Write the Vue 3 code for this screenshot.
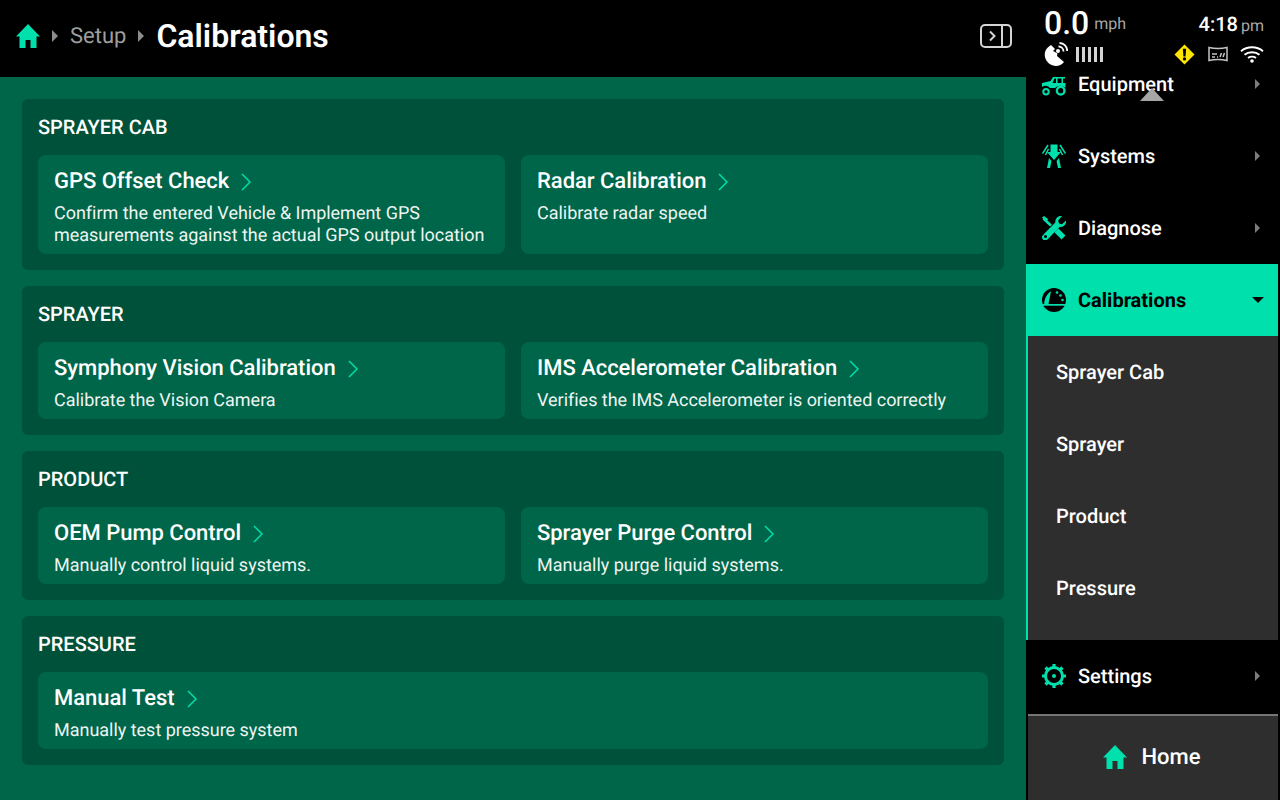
<template>
  <div class="screen">
    <div class="left">
      <header class="topbar">
        <svg class="home-ico" viewBox="0 0 24 24"><path d="M12 0 0 12.500h3.500V24h6v-8h5v8h6V12.500H24z" /></svg>
        <span class="crumb-arrow"></span>
        <span class="crumb">Setup</span>
        <span class="crumb-arrow"></span>
        <h1 class="page-title">Calibrations</h1>
        <svg class="panel-ico" viewBox="0 0 32 24" fill="none" stroke="#d4d4d4" stroke-width="2">
          <rect x="1" y="1" width="30" height="22" rx="4" />
          <path d="M22 1v22" />
          <path d="M10 7.500 14.500 12 10 16.500" />
        </svg>
      </header>
      <main class="content">
        <section v-for="group in groups" :key="group.title" class="group">
          <h2 class="group-title">{{ group.title }}</h2>
          <div class="cards">
            <a v-for="card in group.cards" :key="card.name" class="card" :class="{ wide: card.wide }">
              <div class="card-name">
                {{ card.name }}
                <svg class="chev" viewBox="0 0 10 18" fill="none" stroke="#00e0ac" stroke-width="1.500"><path d="M1 1l8 8-8 8" /></svg>
              </div>
              <p v-for="line in card.lines" :key="line" class="card-desc">{{ line }}</p>
            </a>
          </div>
        </section>
      </main>
    </div>

    <aside class="side">
      <div class="status">
        <div class="status-row">
          <div class="speed"><b>0.0</b><span>mph</span></div>
          <div class="clock"><b>4:18</b><span>pm</span></div>
        </div>
        <div class="status-row icons">
          <div class="gps">
            <svg class="dish" viewBox="0 0 24 24">
              <path fill="#fff" d="M7 3C2 6 0 10 1 15c1 5 6 9 11 9 3 0 6-1.500 8-4l-7-6 .5-2.500L11 10 9 9l2-2z" />
              <circle cx="14" cy="9" r="2" fill="#fff" />
              <path fill="none" stroke="#fff" stroke-width="1.800" d="M14.500 4.500c2.800 0 5 2.200 5 5M15.500 1c4.500 0 7.700 3.500 7.700 8" />
            </svg>
            <div class="bars"><i v-for="n in 5" :key="n"></i></div>
          </div>
          <div class="status-ico">
            <svg class="warn" viewBox="0 0 22 22">
              <path fill="#ffe600" d="M11 .5 21.500 11 11 21.500.5 11z" />
              <path fill="#000" d="M9.300 5h3.400l-.6 8H9.900z" />
              <circle cx="11" cy="15.700" r="1.700" fill="#000" />
            </svg>
            <svg class="shield" viewBox="0 0 20 16" fill="none" stroke="#c4c4c4">
              <path stroke-width="1.500" d="M1 1.500c6 1.200 12 1.200 18 0v13c-6-1.200-12-1.200-18 0z" />
              <path stroke-width="1.500" d="M4 8h5M4 11h3M9 11h1M12 11l1.500-4M15 11l1.500-4" />
            </svg>
            <svg class="wifi" viewBox="0 0 24 18" fill="none" stroke="#fff" stroke-width="1.900">
              <path d="M1 6.200c6.200-5.300 15.800-5.300 22 0M4.500 9.800c4-3.400 11-3.400 15 0M8 13c2.200-1.700 5.800-1.700 8 0" />
              <circle cx="12" cy="16" r="1.800" fill="#fff" stroke="none" />
            </svg>
          </div>
        </div>
      </div>
      <span class="scroll-up"></span>

      <nav class="nav">
        <a class="nav-row">
          <svg class="nav-ico" viewBox="0 0 24 24" fill="#00e0ac">
            <path fill-rule="evenodd" d="M0 11l8.500-2L11 5h12v1.500h-2V11h2.500v4.500h-.5a7 7 0 0 0-10 .5h-5a5.500 5.500 0 0 0-8-1zM12.500 6.500 10.500 11h3.500V6.500zM15.500 6.500V11h4V6.500z" />
            <circle cx="4" cy="19.700" r="2.700" fill="none" stroke="#00e0ac" stroke-width="2" />
            <circle cx="18.700" cy="18.700" r="3.800" fill="none" stroke="#00e0ac" stroke-width="2.400" />
          </svg>
          <span>Equipment</span><i class="arrow"></i>
        </a>
        <a class="nav-row">
          <svg class="nav-ico" viewBox="0 0 24 24" fill="#00e0ac">
            <path d="M8.500 .5h7V8h3.500l-7 8-7-8h3.500z" />
            <path d="M7 14l2.500 3L8 24H5zM17 14l-2.500 3L16 24h3z" />
            <path fill="none" stroke="#00e0ac" stroke-width="1.500" d="M6 1 .5 9.500M6.500 5 3.500 11M18 1l5.500 8.500M17.500 5l3 6" />
          </svg>
          <span>Systems</span><i class="arrow"></i>
        </a>
        <a class="nav-row">
          <svg class="nav-ico" viewBox="0 0 24 24" fill="none">
            <path stroke="#00e0ac" stroke-width="2.600" d="M1.500 2.500 12 12.500" />
            <path fill="#00e0ac" d="M0 1.500 2 0l4 3-1.500 3z" />
            <path stroke="#00e0ac" stroke-width="5.500" d="M13 13l8.500 8.500" />
            <path stroke="#000" stroke-width="7" d="M3 21 14.500 9" />
            <path fill="#00e0ac" d="M24 4.500l-4 3.700-3-.8-.8-3L20 0c-3.500-.7-7 2-6.700 6.500L1.500 18.500c-2 2-1.800 3.700-.5 5s3.200 1.300 5-.5L17.500 11c4 .5 7.200-3 6.500-6.500zM3.500 22a1.500 1.500 0 1 1 0-3 1.500 1.500 0 0 1 0 3z" />
          </svg>
          <span>Diagnose</span><i class="arrow"></i>
        </a>
        <a class="nav-row active">
          <svg class="nav-ico" viewBox="0 0 24 24">
            <circle cx="12" cy="12" r="12" fill="#000" />
            <rect x="0" y="16" width="24" height="1.700" fill="#00e0ac" />
            <path fill="#00e0ac" d="M2.200 16C2.200 10.500 5 6 9 3.300L6.500 16z" />
            <circle cx="15" cy="4.500" r="1.300" fill="#00e0ac" />
            <circle cx="18.500" cy="7.500" r="1.300" fill="#00e0ac" />
            <circle cx="20.500" cy="12" r="1.300" fill="#00e0ac" />
          </svg>
          <span>Calibrations</span><i class="arrow-down"></i>
        </a>
        <div class="sub">
          <a v-for="item in subItems" :key="item" class="sub-row">{{ item }}</a>
        </div>
        <a class="nav-row">
          <svg class="nav-ico" viewBox="0 0 24 24" fill="none" stroke="#00e0ac">
            <circle cx="12" cy="12" r="8.500" stroke-width="3" />
            <circle cx="12" cy="12" r="2" fill="#00e0ac" stroke="none" />
            <path stroke-width="3.200" d="M12 0v3.500M12 20.500V24M0 12h3.500M20.500 12H24M3.500 3.500 6 6M18 18l2.500 2.500M20.500 3.500 18 6M6 18l-2.500 2.500" />
          </svg>
          <span>Settings</span><i class="arrow"></i>
        </a>
      </nav>

      <a class="home-btn">
        <svg class="home-ico" viewBox="0 0 24 24"><path d="M12 0 0 12.500h3.500V24h6v-8h5v8h6V12.500H24z" /></svg>
        <span>Home</span>
      </a>
    </aside>
  </div>
</template>

<script setup>
const groups = [
  {
    title: 'SPRAYER CAB',
    cards: [
      {
        name: 'GPS Offset Check',
        lines: ['Confirm the entered Vehicle & Implement GPS', 'measurements against the actual GPS output location']
      },
      { name: 'Radar Calibration', lines: ['Calibrate radar speed'] }
    ]
  },
  {
    title: 'SPRAYER',
    cards: [
      { name: 'Symphony Vision Calibration', lines: ['Calibrate the Vision Camera'] },
      { name: 'IMS Accelerometer Calibration', lines: ['Verifies the IMS Accelerometer is oriented correctly'] }
    ]
  },
  {
    title: 'PRODUCT',
    cards: [
      { name: 'OEM Pump Control', lines: ['Manually control liquid systems.'] },
      { name: 'Sprayer Purge Control', lines: ['Manually purge liquid systems.'] }
    ]
  },
  {
    title: 'PRESSURE',
    cards: [{ name: 'Manual Test', lines: ['Manually test pressure system'], wide: true }]
  }
]

const subItems = ['Sprayer Cab', 'Sprayer', 'Product', 'Pressure']
</script>

<style>
html,
body {
  margin: 0;
  background: #000;
}
</style>

<style scoped>
.screen {
  display: flex;
  width: 1280px;
  height: 800px;
  overflow: hidden;
  background: #000;
  color: #fff;
  font-family: Roboto, 'Liberation Sans', sans-serif;
  text-rendering: geometricPrecision;
}

.left {
  display: flex;
  flex-direction: column;
  width: 1026px;
}

.topbar {
  display: flex;
  align-items: center;
  flex: none;
  height: 77px;
  padding: 0 14px 5px 16px;
  box-sizing: border-box;
  background: #000;
}

.home-ico {
  width: 24px;
  height: 24px;
  fill: #00e0ac;
}

.crumb-arrow {
  width: 0;
  height: 0;
  margin: 0 12px;
  border-left: 6px solid #8c8c8c;
  border-top: 6px solid transparent;
  border-bottom: 6px solid transparent;
}

.crumb {
  font-size: 22px;
  color: #9e9e9e;
}

.page-title {
  margin: 0;
  font-size: 32px;
  font-weight: 600;
}

.panel-ico {
  width: 32px;
  height: 24px;
  margin-left: auto;
}

.content {
  flex: 1;
  display: flex;
  flex-direction: column;
  gap: 16px;
  padding: 22px 22px 0;
  background: #00664a;
}

.group {
  padding: 16px;
  border-radius: 6px;
  background: #00513a;
}

.group-title {
  margin: 0 0 16px;
  font-size: 20px;
  font-weight: 500;
  line-height: 24px;
}

.cards {
  display: grid;
  grid-template-columns: 1fr 1fr;
  gap: 16px;
}

.card {
  padding: 8px 16px 7px;
  border-radius: 8px;
  background: #00664a;
}

.card.wide {
  grid-column: 1 / -1;
}

.card-name {
  display: flex;
  align-items: center;
  margin-bottom: 4px;
  padding-top: 2px;
  font-size: 22px;
  font-weight: 500;
  line-height: 34px;
  letter-spacing: -0.03px;
}

.chev {
  width: 10px;
  height: 18px;
  margin-left: 12px;
}

.card-desc {
  margin: 0;
  font-size: 18px;
  line-height: 22px;
  letter-spacing: -0.02px;
  color: #eef5f2;
}

.side {
  position: relative;
  display: flex;
  flex-direction: column;
  width: 254px;
}

.status {
  position: absolute;
  top: 0;
  left: 0;
  right: 0;
  z-index: 2;
  height: 68px;
  padding: 6px 16px 0 18px;
  box-sizing: border-box;
  background: #000;
}

.status-row {
  display: flex;
  align-items: flex-start;
  justify-content: space-between;
  height: 36px;
}

.status-row.icons {
  align-items: center;
  height: 24px;
}

.speed {
  line-height: 34px;
}

.speed b {
  font-size: 32px;
  font-weight: 500;
}

.speed span,
.clock span {
  margin-left: 5px;
  font-size: 16px;
  line-height: 1;
  color: #a8a8a8;
  vertical-align: 5px;
}

.clock {
  line-height: 36px;
}

.clock b {
  font-size: 20px;
  font-weight: 500;
}

.clock span {
  margin-left: 3px;
  vertical-align: 0;
}

.gps,
.status-ico {
  display: flex;
  align-items: center;
}

.dish {
  width: 24px;
  height: 24px;
}

.bars {
  display: flex;
  gap: 3px;
  margin-left: 8px;
}

.bars i {
  width: 3px;
  height: 15px;
  background: #d4d4d4;
}

.warn {
  width: 21px;
  height: 21px;
}

.shield {
  width: 20px;
  height: 16px;
  margin-left: 13px;
}

.wifi {
  width: 24px;
  height: 18px;
  margin-left: 12px;
}

.scroll-up {
  position: absolute;
  top: 88px;
  left: 114px;
  z-index: 3;
  width: 0;
  height: 0;
  border-left: 12px solid transparent;
  border-right: 12px solid transparent;
  border-bottom: 13px solid #a6a6a6;
}

.nav {
  display: flex;
  flex-direction: column;
  width: 252px;
  padding-top: 48px;
}

.nav-row {
  display: flex;
  align-items: center;
  height: 72px;
  padding: 0 16px;
  box-sizing: border-box;
  font-size: 20px;
  font-weight: 500;
}

.nav-ico {
  flex: none;
  width: 24px;
  height: 24px;
  margin-right: 12px;
}

.arrow {
  width: 0;
  height: 0;
  margin-left: auto;
  margin-right: 2px;
  border-left: 5px solid #7d7d7d;
  border-top: 5px solid transparent;
  border-bottom: 5px solid transparent;
}

.nav-row.active {
  background: #00e0ac;
  color: #000;
  font-weight: 700;
}

.arrow-down {
  width: 0;
  height: 0;
  margin-left: auto;
  margin-right: -2px;
  border-top: 6px solid #000;
  border-left: 6px solid transparent;
  border-right: 6px solid transparent;
}

.sub {
  height: 304px;
  box-sizing: border-box;
  border-left: 2px solid #00e0ac;
  background: #2e2e2e;
}

.sub-row {
  display: flex;
  align-items: center;
  height: 72px;
  padding-left: 28px;
  font-size: 20px;
  font-weight: 500;
}

.home-btn {
  display: flex;
  align-items: center;
  justify-content: center;
  gap: 14px;
  width: 250px;
  height: 86px;
  margin: 2px 0 0 2px;
  padding: 0 2px 2px 0;
  box-sizing: border-box;
  border-top: 2px solid #757575;
  background: #2e2e2e;
  font-size: 22px;
  font-weight: 500;
}
</style>
